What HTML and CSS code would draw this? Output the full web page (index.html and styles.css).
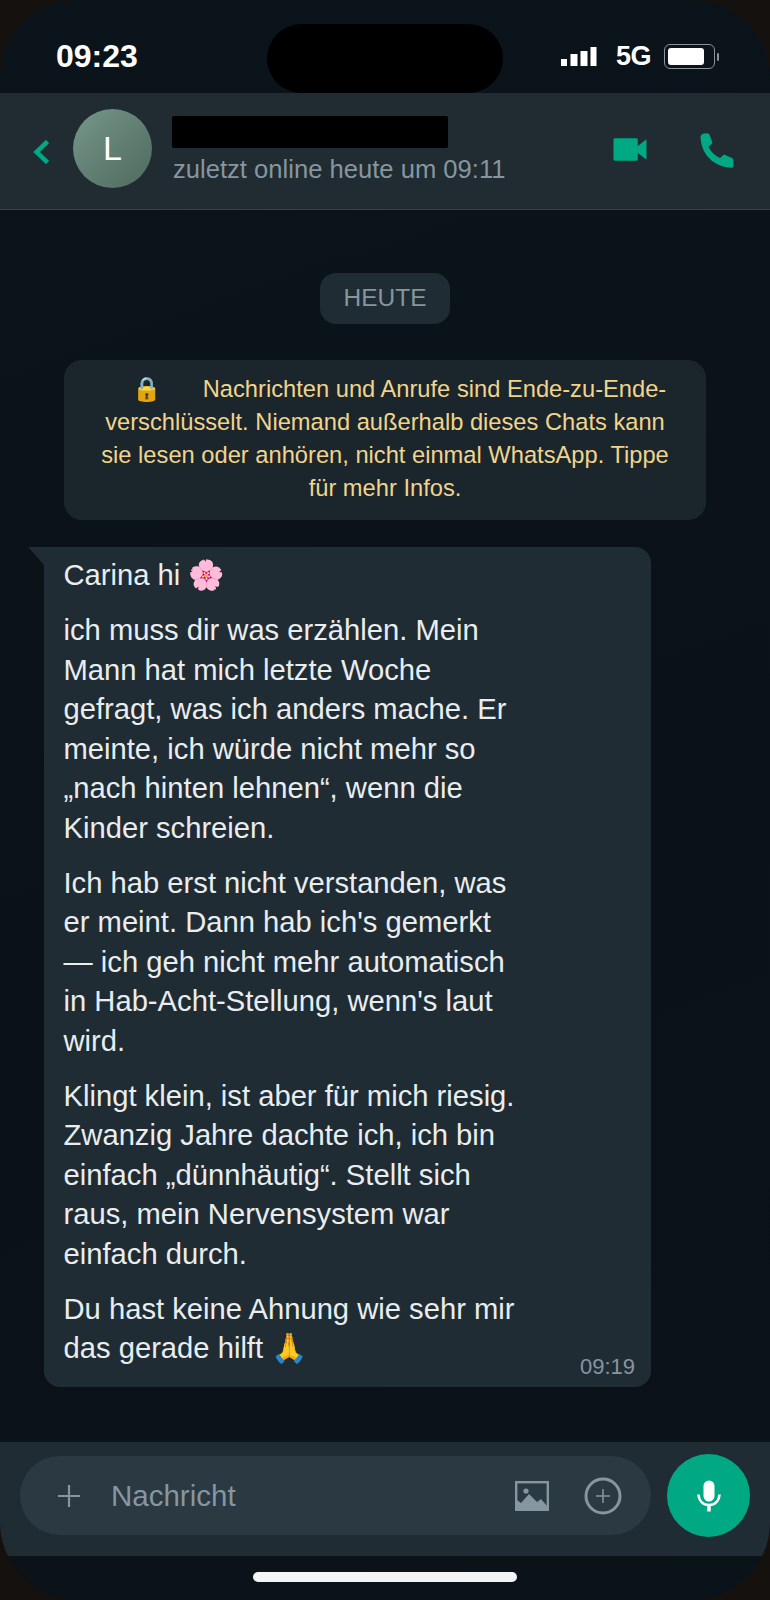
FILE: index.html
```html
<!DOCTYPE html>
<html lang="de">
<head>
  <meta charset="utf-8">
  <title>WhatsApp Chat</title>
  <link rel="stylesheet" href="styles.css">
</head>
<body>
  <div class="phone">
    <!-- Statusleiste -->
    <div class="status-bar">
      <div class="clock">09:23</div>
      <div class="notch"></div>
      <div class="status-right">
        <svg class="signal" width="36" height="20" viewBox="0 0 36 20" fill="#fff">
          <rect x="0" y="12" width="6" height="7"/>
          <rect x="9.500" y="7" width="7" height="12"/>
          <rect x="19.500" y="4" width="7" height="15"/>
          <rect x="29.500" y="0" width="6" height="19"/>
        </svg>
        <span class="net">5G</span>
        <div class="battery"><div class="battery-level"></div></div>
        <div class="battery-cap"></div>
      </div>
    </div>

    <!-- Kopfzeile -->
    <header class="chat-header">
      <svg class="back" width="16" height="24" viewBox="0 0 16 24" fill="none" stroke="#00a884" stroke-width="4.500">
        <path d="M14.500 1.500 L3.500 12 L14.500 22.500"/>
      </svg>
      <div class="avatar">L</div>
      <div class="contact">
        <div class="name-redacted"></div>
        <div class="last-seen">zuletzt online heute um 09:11</div>
      </div>
      <svg class="icon-video" width="34" height="23" viewBox="0 0 35 23" fill="#00a884">
        <path d="M2 0 H24 a1.500 1.500 0 0 1 1.500 1.500 V8 L34.500 1 V22 L25.500 15 V21.500 a1.500 1.500 0 0 1 -1.500 1.500 H2 a1.500 1.500 0 0 1 -1.500 -1.500 V1.500 A1.500 1.500 0 0 1 2 0 Z"/>
      </svg>
      <svg class="icon-phone" width="34" height="35" viewBox="0 0 34 35" fill="#00a884">
        <path d="M0.500 5 Q0.300 1 4 0.500 L7 0.300 Q9 0.300 9.700 2 L12.500 10 L8.500 14 Q12.500 21.500 20 25 L24 21.500 L32 25 Q33.500 25.800 33.500 27.500 L33.500 33 Q33.500 34.700 31.500 34.700 Q21 34.500 12 28 Q1.500 19.500 0.500 5 Z"/>
      </svg>
    </header>

    <!-- Chatverlauf -->
    <main class="chat">
      <div class="day-chip">HEUTE</div>

      <div class="notice">
        <span class="notice-lock">🔒</span>Nachrichten und Anrufe sind Ende-zu-Ende-verschlüsselt. Niemand außerhalb dieses Chats kann sie lesen oder anhören, nicht einmal WhatsApp. Tippe für mehr Infos.
      </div>

      <div class="bubble">
        <p>Carina hi 🌸</p>
        <p>ich muss dir was erzählen. Mein Mann hat mich letzte Woche gefragt, was ich anders mache. Er meinte, ich würde nicht mehr so „nach hinten lehnen“, wenn die Kinder schreien.</p>
        <p>Ich hab erst nicht verstanden, was er meint. Dann hab ich's gemerkt — ich geh nicht mehr automatisch in Hab-Acht-Stellung, wenn's laut wird.</p>
        <p>Klingt klein, ist aber für mich riesig. Zwanzig Jahre dachte ich, ich bin einfach „dünnhäutig“. Stellt sich raus, mein Nervensystem war einfach durch.</p>
        <div class="last-row">
          <p>Du hast keine Ahnung wie sehr mir das gerade hilft 🙏</p>
          <span class="msg-time">09:19</span>
        </div>
      </div>
    </main>

    <!-- Eingabe -->
    <footer class="composer">
      <div class="input-pill">
        <svg class="icon-plus" width="24" height="24" viewBox="0 0 24 24" stroke="#8696a0" stroke-width="2.200">
          <path d="M1 12 H23 M12 1 V23"/>
        </svg>
        <span class="placeholder">Nachricht</span>
        <svg class="icon-image" width="34" height="30" viewBox="0 0 34 30">
          <rect x="1.200" y="1.200" width="31.600" height="27.600" fill="none" stroke="#8696a0" stroke-width="2.400"/>
          <circle cx="11" cy="10" r="2.600" fill="#8696a0"/>
          <path d="M2 26 L2 19 L6 22 L14 13 L22 21 L26 18 L32 25 L32 28 L2 28 Z" fill="#8696a0"/>
        </svg>
        <svg class="icon-add" width="38" height="38" viewBox="0 0 38 38" fill="none" stroke="#8696a0">
          <circle cx="19" cy="19" r="17" stroke-width="3"/>
          <path d="M12 19 H26 M19 12 V26" stroke-width="1.500"/>
        </svg>
      </div>
      <div class="mic-btn">
        <svg width="24" height="32" viewBox="0 0 24 32" fill="none" stroke="#fff">
          <rect x="6.500" y="0.500" width="11" height="21" rx="5.500" fill="#fff" stroke="none"/>
          <path d="M1.500 14.500 C2 21 6 25 12 25 C18 25 22 21 22.500 14.500" stroke-width="2.600"/>
          <path d="M12 25 V31.500" stroke-width="3.500"/>
        </svg>
      </div>
    </footer>

    <div class="home-area">
      <div class="home-bar"></div>
    </div>
  </div>
</body>
</html>
```

FILE: styles.css
```css
* {
  margin: 0; padding: 0; box-sizing: border-box;
}
body {
  width: 770px;
  height: 1600px;
  background-color: #15110e;
  font-family: "Liberation Sans", Arial, sans-serif;
  overflow: hidden;
}

/* Gerät */
.phone {
  display: flex; flex-direction: column;
  width: 770px; height: 1600px;
  border-radius: 78px;
  overflow: hidden;
  background: linear-gradient(160deg, #0a141a 0%, #0a1218 55%, #0a1319 100%);
}

/* Statusleiste */
.status-bar {
  display: flex; align-items: flex-start;
  height: 93px;
  flex-shrink: 0;
  padding-left: 56px;
}
.clock {
  width: 211px;
  margin-top: 37px;
  color: #fff;
  font-size: 32px;
  font-weight: 700;
  line-height: 38px;
}
.notch {
  width: 236px; height: 69px;
  margin-top: 24px;
  background-color: #000;
  border-radius: 35px;
}
.status-right {
  display: flex; align-items: center;
  margin-left: 58px;
  margin-top: 44px;
  height: 25px;
}
.signal { margin-top: 1px; }
.net {
  margin-left: 19px;
  color: #fff;
  font-size: 27px;
  font-weight: 700;
  letter-spacing: -0.5px;
}
.battery {
  width: 51px; height: 25px;
  margin-left: 13px;
  padding: 3px;
  border: 1.500px solid #8a929a;
  border-radius: 6px;
}
.battery-level {
  width: 36px; height: 100%;
  background-color: #fff;
  border-radius: 3px;
}
.battery-cap {
  width: 2px; height: 8px;
  margin-left: 2px;
  background-color: #8a929a;
  border-radius: 1px;
}

/* Kopfzeile */
.chat-header {
  display: flex; align-items: center;
  height: 117px;
  flex-shrink: 0;
  padding-left: 33px;
  background-color: #202b32;
  border-bottom: 1px solid #33424c;
}
.back { flex-shrink: 0; margin-top: 1px; }
.avatar {
  display: flex; align-items: center; justify-content: center;
  width: 79px; height: 79px;
  margin-left: 24px;
  margin-top: -6px;
  color: #fff;
  font-size: 34px;
  background: linear-gradient(135deg, #76978a, #4d6a5d);
  border-radius: 50%;
}
.contact {
  width: 441px;
  margin-left: 20px;
  margin-top: -3px;
}
.name-redacted {
  width: 276px; height: 32px;
  background-color: #000;
  border-radius: 2px;
}
.last-seen {
  margin-top: 6px;
  margin-left: 1px;
  color: #8696a0;
  font-size: 25.600px;
  line-height: 30px;
}
.icon-video { margin-top: -3px; }
.icon-phone { margin-left: 53px; margin-top: -1px; }

/* Chatverlauf */
.chat {
  flex: 1;
  padding-top: 63px;
}
.day-chip {
  width: 130px; height: 51px;
  margin: 0 auto;
  color: #8696a0;
  font-size: 24.500px;
  line-height: 50px;
  text-align: center;
  background-color: #1f2c33;
  border-radius: 16px;
}
.notice {
  width: 642px;
  height: 160px;
  margin: 36px 0 0 64px;
  padding: 13px 30px 0;
  color: #f0d48c;
  font-size: 23.700px;
  line-height: 33px;
  text-align: center;
  background-color: #1a252c;
  border-radius: 18px;
}
.notice-lock { margin: 0 42px 0 28px; }

.bubble {
  position: relative;
  width: 607px;
  margin: 27px 0 0 44px;
  padding: 9px 16px 18.600px 19.500px;
  color: #e9edef;
  font-size: 29.200px;
  line-height: 39.450px;
  background-color: #202c33;
  border-radius: 0 16px 16px 16px;
}
/* Sprechblasen-Ecke */
.bubble::before {
  content: "";
  position: absolute;
  top: 0; left: -16px;
  width: 16px; height: 18px;
  background-color: #202c33;
  clip-path: polygon(0 0, 100% 0, 100% 100%);
}
.bubble p {
  max-width: 458px;
  margin-bottom: 15.800px;
}
.last-row {
  display: flex; justify-content: space-between; align-items: flex-end;
}
.last-row p { margin-bottom: 0; }
.msg-time {
  color: #8696a0;
  font-size: 22px;
  line-height: 28px;
  margin-bottom: -12px;
}

/* Eingabe */
.composer {
  display: flex; align-items: center;
  height: 114px;
  flex-shrink: 0;
  padding: 0 20px 7px;
  background-color: #202c33;
}
.input-pill {
  display: flex; align-items: center;
  width: 631px; height: 79px;
  padding-left: 37px;
  background-color: #2a3942;
  border-radius: 40px;
}
.placeholder {
  width: 348px;
  margin-left: 30px;
  color: #8696a0;
  font-size: 29.500px;
}
.icon-image { margin-left: 56px; }
.icon-add { margin-left: 35px; }
.mic-btn {
  display: flex; align-items: center; justify-content: center;
  width: 83px; height: 83px;
  margin-left: 16px;
  background-color: #00a884;
  border-radius: 50%;
}

.home-area {
  display: flex; justify-content: center;
  height: 44px;
  flex-shrink: 0;
  padding-top: 16px;
}
.home-bar {
  width: 264px; height: 10px;
  background-color: #f2f4f5;
  border-radius: 5px;
}
```
